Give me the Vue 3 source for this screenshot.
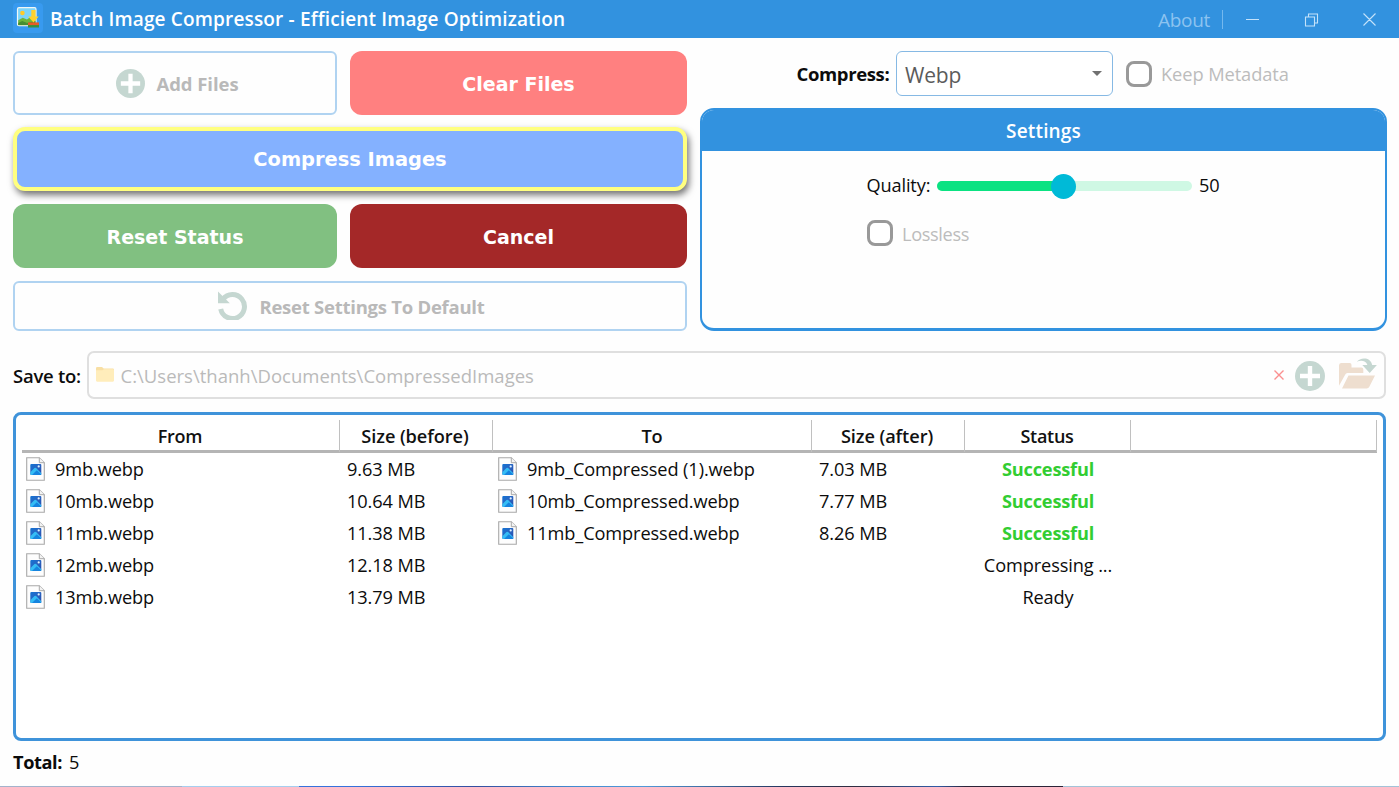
<script setup>
const columns = [
  { label: 'From', key: 'from' },
  { label: 'Size (before)', key: 'before' },
  { label: 'To', key: 'to' },
  { label: 'Size (after)', key: 'after' },
  { label: 'Status', key: 'state' },
]
const rows = [
  { from: '9mb.webp', before: '9.63 MB', to: '9mb_Compressed (1).webp', after: '7.03 MB', status: 'Successful' },
  { from: '10mb.webp', before: '10.64 MB', to: '10mb_Compressed.webp', after: '7.77 MB', status: 'Successful' },
  { from: '11mb.webp', before: '11.38 MB', to: '11mb_Compressed.webp', after: '8.26 MB', status: 'Successful' },
  { from: '12mb.webp', before: '12.18 MB', to: '', after: '', status: 'Compressing ...' },
  { from: '13mb.webp', before: '13.79 MB', to: '', after: '', status: 'Ready' },
]
</script>

<template>
  <div class="window">
    <svg class="defs" width="0" height="0" aria-hidden="true">
      <defs>
        <linearGradient id="tile" x1="0" y1="0" x2="1" y2="1">
          <stop offset="0" stop-color="#1474d4" /><stop offset=".55" stop-color="#2b62bf" /><stop offset="1" stop-color="#254bab" />
        </linearGradient>
        <symbol id="file" viewBox="0 0 19 24">
          <path d="M.7.7h12.6l5 5v17.6H.7z" fill="#fdfdfd" stroke="#a9a9a9" stroke-width="1.1" />
          <path d="M13.3.7v5h5" fill="#f3f3f3" stroke="#a9a9a9" />
          <rect x="4.3" y="7" width="11" height="11" rx="1" fill="url(#tile)" />
          <path d="M4.3 15.2 8.5 11.1q.8-.7 1.6 0l5.2 5.2v.7q0 1-1 1h-9q-1 0-1-1z" fill="#35bdf5" />
          <path d="M6 18 10.8 13.3l4.5 4.3-.6.4z" fill="#1684df" />
          <circle cx="12.7" cy="9.4" r="1.1" fill="#e1f2ff" />
        </symbol>
        <symbol id="plus" viewBox="0 0 30 30">
          <circle cx="15" cy="15" r="15" fill="#c5d7d1" />
          <path d="M12.8 5h4.4v7.8H25v4.4h-7.8V25h-4.4v-7.8H5v-4.4h7.8z" fill="#fff" />
        </symbol>
      </defs>
    </svg>

    <header class="titlebar">
      <svg class="logo" viewBox="0 0 30 30">
        <rect width="30" height="30" rx="4" fill="#389aef" />
        <rect x="4.5" y="4.7" width="18.5" height="18" rx="1.5" fill="#7dd4fa" stroke="#f3f7f5" stroke-width="1.2" />
        <circle cx="9.4" cy="10" r="2.3" fill="#ffca28" />
        <path d="m5.2 17.2 4.6-2.4 4.2 1.6 3.4-2.4 5 2v6.3H5.2z" fill="#6db53b" />
        <path d="m5.2 20 4-2 5 2 8.2-2v4.1H5.2z" fill="#478e31" />
        <path d="M15 21h11v3.5H15z" fill="#38913e" /><path d="M15 19.4h11v2.7H15z" fill="#e85b26" />
        <path d="M18.3 7h4.3v6.5h3.1l-5.2 6.1-5.4-6.1h3.2z" fill="#ffd12d" />
      </svg>
      <h1>Batch Image Compressor - Efficient Image Optimization</h1>
      <span class="about">About</span>
      <i class="bar"></i>
      <svg class="controls" viewBox="0 0 150 20" fill="none" stroke="#c4e2fa" stroke-width="1.1">
        <path d="M13 10.5h13M72.5 8h9v9h-9zM75.5 8V5h9v9h-3M130.5 4.5l12 12M142.5 4.5l-12 12" />
      </svg>
    </header>

    <main>
      <section class="upper">
        <div class="actions">
          <button class="outline add"><svg class="i-plus"><use href="#plus" /></svg><span>Add Files</span></button>
          <button class="solid clear">Clear Files</button>
          <button class="solid compress">Compress Images</button>
          <button class="solid reset">Reset Status</button>
          <button class="solid cancel">Cancel</button>
          <button class="outline defaults">
            <svg class="i-reset" viewBox="0 0 29 29">
              <path d="M4.9 8.3A12 12 0 1 1 2.7 18" fill="none" stroke="#c5d7d1" stroke-width="5" />
              <path d="M0 .5v11.8h11.8z" fill="#c5d7d1" />
            </svg>
            <span>Reset Settings To Default</span>
          </button>
        </div>

        <div class="options">
          <div class="format">
            <b>Compress:</b>
            <div class="select"><span>Webp</span><i></i></div>
            <i class="check"></i><span class="meta">Keep Metadata</span>
          </div>
          <div class="settings">
            <h2>Settings</h2>
            <div class="quality"><span class="qlabel">Quality:</span><div class="track"><i class="fill"></i><i class="thumb"></i></div><span class="value">50</span></div>
            <div class="lossless"><i class="check"></i><span>Lossless</span></div>
          </div>
        </div>
      </section>

      <section class="save">
        <label>Save to:</label>
        <div class="path">
          <svg class="i-folder" viewBox="0 0 18 15">
            <path d="M0 1.2Q0 0 1.2 0H6l1.7 1.6h9.1Q18 1.6 18 2.8V5H0z" fill="#f8dfa4" />
            <path d="M0 3.3h6.5l1.4-1h9q1.1 0 1.1 1v10.3q0 1.1-1.1 1.1H1.1Q0 14.7 0 13.6z" fill="#ffedbb" />
          </svg>
          <span>C:\Users\thanh\Documents\CompressedImages</span>
          <svg class="i-x" viewBox="0 0 10 10"><path d="M.5.5l9 9m0-9-9 9" stroke="#fb8f8f" stroke-width="1.4" /></svg>
          <svg class="i-add"><use href="#plus" /></svg>
          <svg class="i-open" viewBox="0 0 38 32">
            <path d="M0 27.8V7.5Q0 5 2 5h8.8q1.7 0 1.7 2v2.5h9.8q2 0 2 2V15H8.6Q6.8 15 6 17z" fill="#eedecf" />
            <path d="M9.5 17.5H36L30.3 28.8q-.8 1.6-2.7 1.6H3z" fill="#eedecf" />
            <path d="M17.8 3.8C21-.8 31.5-1.6 33.2 7h4.7l-7.2 8-7.4-8h5.1C27.1 2.7 21.8 1.8 17.8 3.8z" fill="#c5d7d1" />
          </svg>
        </div>
      </section>

      <section class="files">
        <div class="grid head">
          <span v-for="c in columns" :key="c.key" :class="c.key">{{ c.label }}</span><span></span>
        </div>
        <div v-for="r in rows" :key="r.from" class="grid row">
          <span class="file"><svg><use href="#file" /></svg>{{ r.from }}</span>
          <span class="size">{{ r.before }}</span>
          <span class="file to"><template v-if="r.to"><svg><use href="#file" /></svg>{{ r.to }}</template></span>
          <span class="size">{{ r.after }}</span>
          <span class="status" :class="{ ok: r.status === 'Successful' }">{{ r.status }}</span>
        </div>
      </section>
      <footer><b>Total:</b><span>5</span></footer>
    </main>
    <div class="desktop-edge"></div>
  </div>
</template>

<style>
html, body { margin: 0; }
</style>
<style scoped>
* { box-sizing: border-box; }
.window { width: 1399px; height: 787px; overflow: hidden; display: flex; flex-direction: column; background: #fefefe; color: #0c0c0c; font: 18.2px/24px "Open Sans", "Noto Sans", sans-serif; letter-spacing: -.25px; white-space: nowrap; }
.defs { position: absolute; }
svg, i { display: block; flex: none; }
button { margin: 0; padding: 0; }
.titlebar { height: 38px; flex: none; display: flex; align-items: center; background: #3292df; color: #fff; padding-left: 13px; }
.logo { width: 30px; height: 30px; margin-top: -2px; }
h1 { margin: 0 0 0 7px; font-size: 19px; font-weight: 600; letter-spacing: .16px; width: 1101px; }
.about { width: 59px; font-size: 19px; margin-top: 1px; margin-left: 7px; color: #8cc3f0; letter-spacing: -.3px; }
.bar { width: 1px; height: 19px; background: #74b8ee; margin-left: 5px; }
.controls { width: 150px; height: 20px; margin-left: 10px; margin-top: -1px; }
main { padding: 13px 13px 0; height: 748px; flex: none; }
.upper { display: grid; grid-template-columns: 674px 687px; column-gap: 13px; }
.actions { display: grid; grid-template-columns: 324px 337px; grid-template-rows: 64px 64px 64px 50px; column-gap: 13px; row-gap: 12.6px; }
button { border: 0; display: flex; align-items: center; justify-content: center; }
.outline { border: 2px solid #b0d3f1; border-radius: 6px; background: #fefefe; color: #b9b9b9; font: 700 18.5px/24px "Open Sans", sans-serif; letter-spacing: -.05px; }
.add { padding-left: 5px; }
.add span { margin-left: 11px; padding-top: 1px; }
.i-plus { width: 29px; height: 29px; }
.defaults { grid-column: 1 / 3; padding-left: 3px; }
.defaults span { margin-left: 12px; padding-top: 2px; letter-spacing: -.25px; }
.i-reset { width: 29px; height: 29px; margin-top: -1px; }
.solid { border-radius: 12px; color: #fff; font: 700 19px/24px "DejaVu Sans", Verdana, sans-serif; padding-top: 1px; }
.clear { background: #ff8080; }
.compress { grid-column: 1 / 3; background: #84b1ff; border: 4px solid #ffff80; font-size: 19.4px; padding-top: 2px; margin: -.5px 0 .5px; box-shadow: 2px 4px 7px rgba(0, 0, 0, .55); }
.reset { background: #81c081; }
.cancel { background: #a42828; }
.format { height: 44px; display: flex; align-items: center; padding-left: 96.5px; }
.format b { width: 99.5px; font-size: 18.5px; letter-spacing: -.36px; padding-top: 2px; }
.select { width: 217px; height: 45px; border: 1px solid #86b9e4; border-radius: 6px; padding: 3px 10px 0 8px; display: flex; align-items: center; justify-content: space-between; color: #5b5b5b; font-size: 21px; letter-spacing: -.2px; background: #fff; }
.select i { border: 5px solid transparent; border-top: 5px solid #717171; border-bottom: 0; margin-top: -3px; }
.check { width: 26px; height: 26px; border: 3px solid #999; border-radius: 8px; background: #fff; }
.format .check { margin-left: 12.5px; margin-top: 1px; }
.meta { margin-left: 9.5px; color: #bcbcbc; font-size: 18.3px; letter-spacing: -.1px; padding-top: 2px; }
.settings { height: 223px; margin-top: 13px; border: 2px solid #3292df; border-bottom-width: 3px; border-radius: 14px; overflow: hidden; }
h2 { height: 41px; margin: 0; background: #3292df; color: #fff; font-size: 19px; font-weight: 600; line-height: 42px; text-align: center; letter-spacing: .15px; }
.quality { height: 26px; margin: 22px 0 0 164.5px; display: flex; align-items: center; }
.qlabel { width: 70.5px; margin-top: -2px; letter-spacing: -.15px; }
.track { width: 255px; height: 10px; border-radius: 5px; background: #cff8e4; position: relative; }
.fill { width: 127px; height: 10px; border-radius: 5px 0 0 5px; background: #0be282; }
.thumb { width: 25px; height: 25px; border-radius: 50%; background: #00bad7; position: absolute; left: 114px; top: -7.5px; }
.value { margin-left: 7px; margin-top: -2px; }
.lossless { margin: 20.5px 0 0 164.5px; display: flex; align-items: center; color: #bcbcbc; }
.lossless span { margin-left: 9.5px; padding-top: 2px; letter-spacing: -.35px; }
.save { height: 48px; margin-top: 20px; display: flex; align-items: center; }
label { width: 74px; font-weight: 600; font-size: 18.5px; padding-top: 2px; }
.path { width: 1299px; height: 48px; border: 2px solid #dfdfdf; border-radius: 7px; display: flex; align-items: center; padding-left: 7px; color: #bababa; }
.i-folder { width: 18px; height: 15px; margin-top: -2px; }
.path span { margin-left: 6.5px; padding-top: 1px; width: 1153.5px; font-size: 18.5px; letter-spacing: .01px; }
.i-x { width: 10px; height: 10px; }
.i-add { width: 30px; height: 30px; margin-left: 11px; margin-top: 2px; }
.i-open { width: 38px; height: 32px; margin-left: 14px; margin-top: -2px; }
.files { width: 1373px; height: 329px; margin-top: 13px; border: 3px solid #3f93da; border-radius: 8px; padding: 5px 6px; background: #fff; }
.grid { display: grid; grid-template-columns: 318px 153px 319px 153px 166px 246px; }
.head { height: 33px; border-bottom: 3px solid #b5b5b5; font-weight: 600; width: 1355px; }
.head span { border-right: 1px solid #c0c0c0; text-align: center; line-height: 32px; color: #111; }
.head .from, .head .state { font-size: 18px; letter-spacing: -.3px; padding-right: 1px; }
.head .before, .head .after { letter-spacing: -.08px; padding-right: 2px; }
.row { height: 32px; align-items: center; letter-spacing: -.11px; }
.file { display: flex; align-items: center; padding-left: 4px; }
.file svg { width: 19px; height: 24px; margin-right: 10px; margin-top: -1px; }
.file.to { padding-left: 5px; }
.size { padding-left: 7px; }
.status { text-align: center; }
.ok { color: #32cd32; font-weight: 700; letter-spacing: -.2px; }
footer { display: flex; margin-top: 9px; gap: 7px; }
footer b { color: #0b0b0b; letter-spacing: -.4px; }
.desktop-edge { height: 1px; flex: none; background: linear-gradient(90deg, #a3b3cc 0 13%, #a6ceef 13% 21.4%, #3672dc 21.4% 25%, #344e9f 34%, #438bd0 41%, #5199d8 46%, #26365e 56%, #302d40 61%, #315ba6 67%, #2b2438 69% 76%, #a3c3d8 76%); }
</style>
